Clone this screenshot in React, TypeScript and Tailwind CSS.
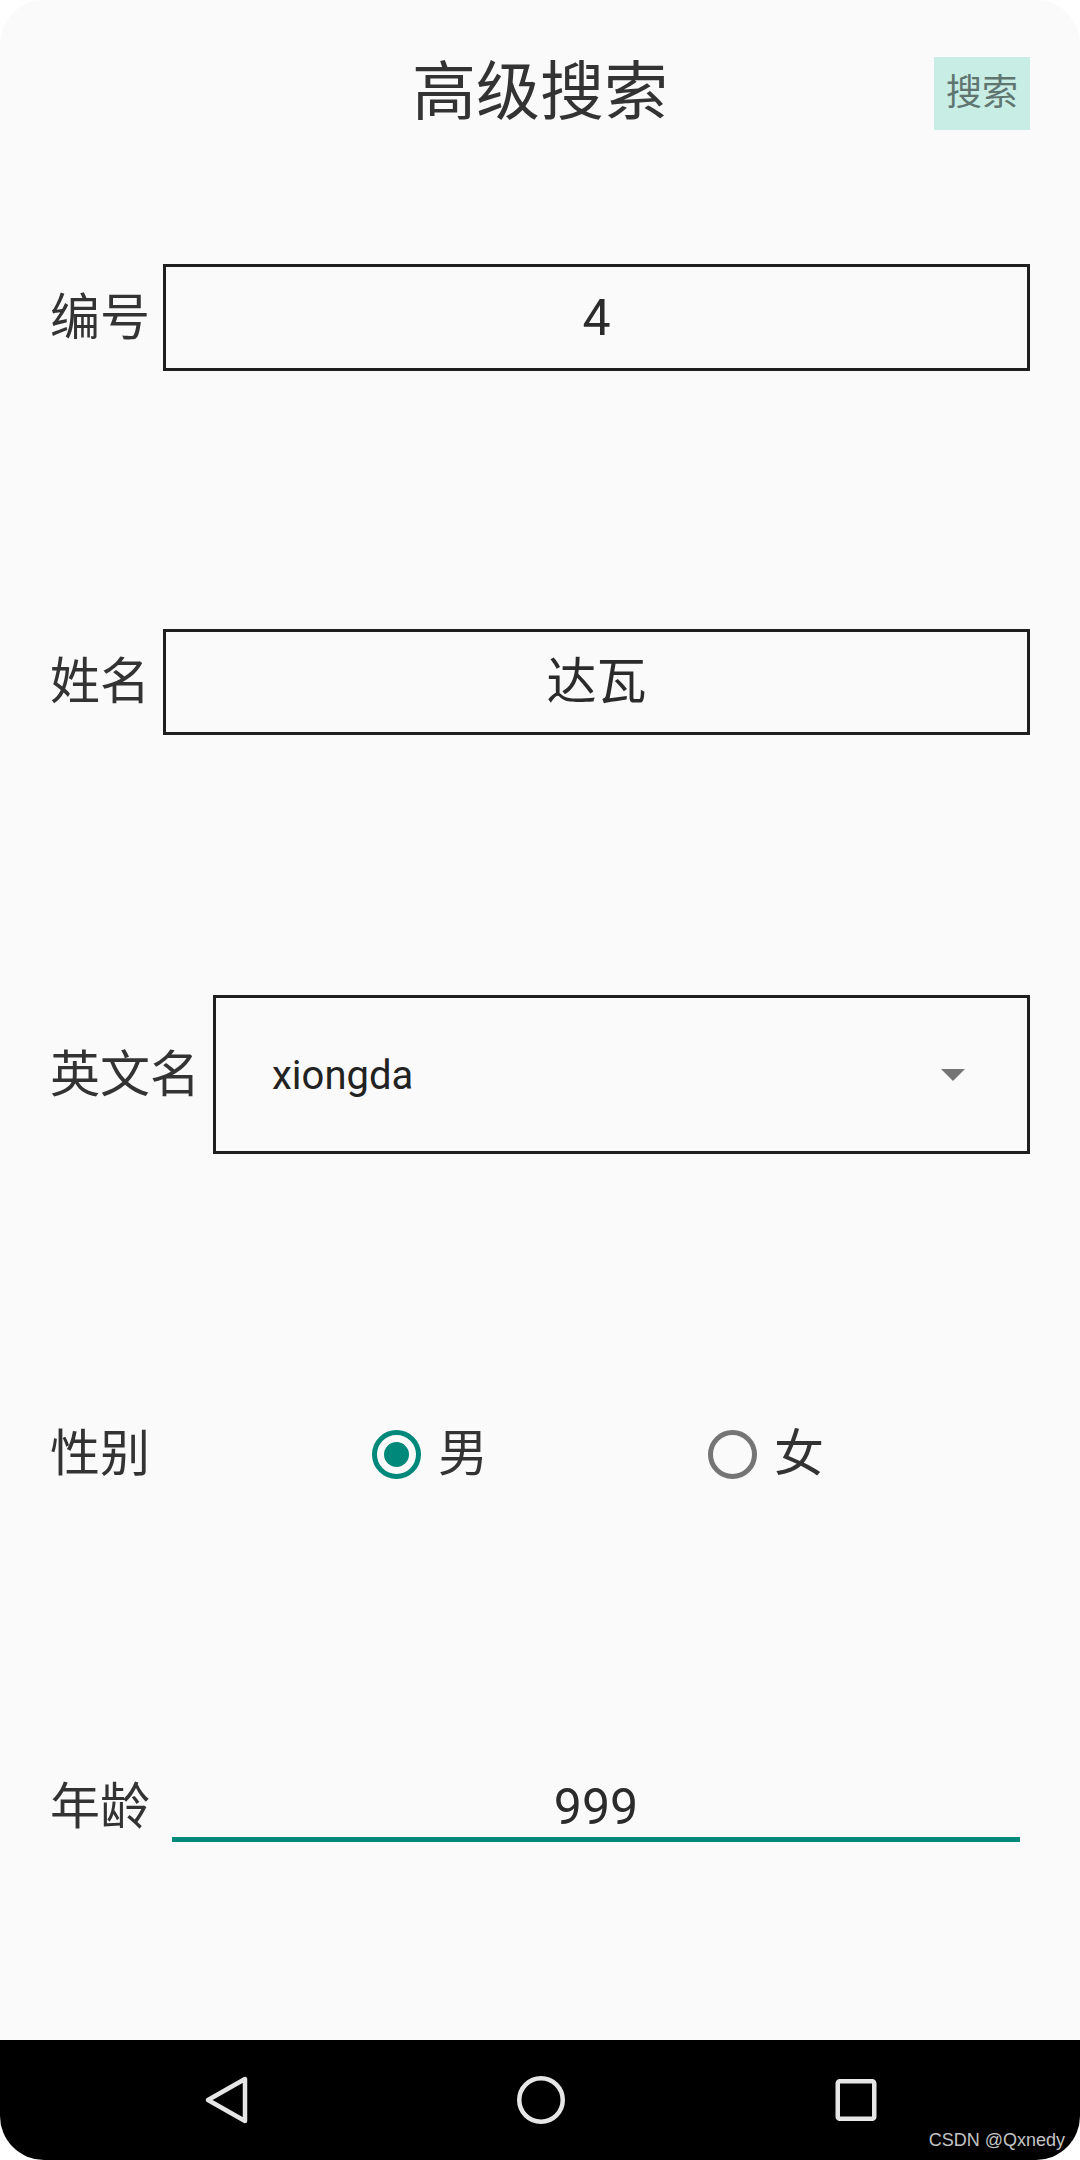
import React from "react";

const font = { fontFamily: "Roboto, 'Noto Sans CJK SC', sans-serif" };

function Label({ children }: { children: React.ReactNode }) {
  return (
    <div className="shrink-0 text-[50px] leading-none text-[#333333]">{children}</div>
  );
}

function Radio({ checked, label }: { checked: boolean; label: string }) {
  return (
    <div className="flex items-center">
      <div
        className={
          checked
            ? "w-[49px] h-[49px] rounded-full border-[5px] border-[#00897b] flex items-center justify-center"
            : "w-[49px] h-[49px] rounded-full border-[5px] border-[#757575]"
        }
      >
        {checked ? <div className="w-[25px] h-[25px] rounded-full bg-[#00897b]" /> : null}
      </div>
      <div className="ml-[17px] text-[50px] leading-none text-[#333333]">{label}</div>
    </div>
  );
}

export default function App() {
  return (
    <div className="w-[1080px] h-[2160px] bg-white" style={font}>
      <div className="w-full h-full rounded-[44px] overflow-hidden flex flex-col bg-[#fafafa]">
        {/* header */}
        <div className="h-[186px] shrink-0 flex items-center px-[50px]">
          <div className="w-[96px]" />
          <div className="flex-1 text-center text-[64px] leading-none text-[#333333]">高级搜索</div>
          <div className="w-[96px] h-[73px] bg-[#c7ede4] flex items-center justify-center text-[36px] leading-none text-[#5f7570]">
            搜索
          </div>
        </div>

        {/* 编号 */}
        <div className="mt-[78px] flex items-center pl-[50px] pr-[50px]">
          <Label>编号</Label>
          <div className="flex-1 ml-[13px] h-[107px] border-[3px] border-[#1f1f1f] flex items-center justify-center text-[50px] leading-none text-[#2b2b2b]">
            4
          </div>
        </div>

        {/* 姓名 */}
        <div className="mt-[258px] flex items-center pl-[50px] pr-[50px]">
          <Label>姓名</Label>
          <div className="flex-1 ml-[13px] h-[106px] border-[3px] border-[#1f1f1f] flex items-center justify-center text-[50px] leading-none text-[#2b2b2b]">
            达瓦
          </div>
        </div>

        {/* 英文名 */}
        <div className="mt-[260px] flex items-center pl-[50px] pr-[50px]">
          <Label>英文名</Label>
          <div className="flex-1 ml-[13px] h-[159px] border-[3px] border-[#1f1f1f] flex items-center pl-[56px] pr-[62px]">
            <div className="flex-1 text-[40px] leading-none text-[#222222] pt-[2px]">xiongda</div>
            <svg width="24" height="12" viewBox="0 0 24 12">
              <path d="M0 0 L24 0 L12 12 Z" fill="#757575" />
            </svg>
          </div>
        </div>

        {/* 性别 */}
        <div className="mt-[275px] h-[50px] flex items-center pl-[50px]">
          <Label>性别</Label>
          <div className="ml-[222px]">
            <Radio checked label="男" />
          </div>
          <div className="ml-[220px]">
            <Radio checked={false} label="女" />
          </div>
        </div>

        {/* 年龄 */}
        <div className="mt-[303px] flex items-start pl-[50px] pr-[60px]">
          <Label>年龄</Label>
          <div className="flex-1 ml-[22px] border-b-[5px] border-[#00897b] pb-[5px] text-center text-[50px] leading-none text-[#2b2b2b]">
            999
          </div>
        </div>

        <div className="flex-1" />

        {/* nav bar */}
        <div className="relative h-[120px] shrink-0 bg-black flex items-center pl-[196px] gap-[255px]">
          <svg width="60" height="60" viewBox="0 0 60 60">
            <path d="M12 30 L49 9 L49 51 Z" fill="none" stroke="#e6e6e6" strokeWidth="4.5" strokeLinejoin="round" />
          </svg>
          <svg width="60" height="60" viewBox="0 0 60 60">
            <circle cx="30" cy="30" r="21.75" fill="none" stroke="#e6e6e6" strokeWidth="4.5" />
          </svg>
          <svg width="60" height="60" viewBox="0 0 60 60">
            <rect x="11.75" y="11.25" width="36.5" height="37.5" rx="2" fill="none" stroke="#e6e6e6" strokeWidth="4.5" />
          </svg>
          <div
            className="absolute right-[15px] bottom-[11px] text-[18px] leading-none text-[#c4c4c4]"
            style={{ fontFamily: "'Liberation Sans', Arial, sans-serif" }}
          >
            CSDN @Qxnedy
          </div>
        </div>
      </div>
    </div>
  );
}
